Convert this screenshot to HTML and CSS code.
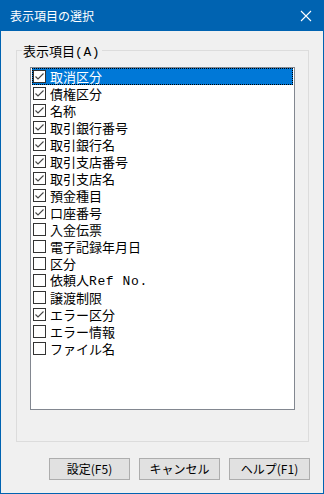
FILE: index.html
```html
<!DOCTYPE html>
<html lang="ja">
<head>
    <meta charset="UTF-8">
    <meta name="viewport" content="width=device-width, initial-scale=1.0">
    <title>表示項目の選択</title>
    <link rel="stylesheet" href="styles.css">
</head>
<body>
    <div class="window">
        <div class="titlebar">
            <span class="title">表示項目の選択</span>
            <span class="close">
                <svg width="12" height="12" viewBox="0 0 12 12">
                    <path d="M1 1 L11 11 M11 1 L1 11" stroke="#fff" stroke-width="1.1" fill="none"/>
                </svg>
            </span>
        </div>

        <div class="content">
            <div class="group">
                <div class="group-label">表示項目<span class="latin">(A)</span></div>
                <ul class="listbox">
                    <li class="item selected"><span class="check on"></span><span>取消区分</span></li>
                    <li class="item"><span class="check on"></span><span>債権区分</span></li>
                    <li class="item"><span class="check on"></span><span>名称</span></li>
                    <li class="item"><span class="check on"></span><span>取引銀行番号</span></li>
                    <li class="item"><span class="check on"></span><span>取引銀行名</span></li>
                    <li class="item"><span class="check on"></span><span>取引支店番号</span></li>
                    <li class="item"><span class="check on"></span><span>取引支店名</span></li>
                    <li class="item"><span class="check on"></span><span>預金種目</span></li>
                    <li class="item"><span class="check on"></span><span>口座番号</span></li>
                    <li class="item"><span class="check"></span><span>入金伝票</span></li>
                    <li class="item"><span class="check"></span><span>電子記録年月日</span></li>
                    <li class="item"><span class="check"></span><span>区分</span></li>
                    <li class="item"><span class="check"></span><span>依頼人<span class="latin">Ref No.</span></span></li>
                    <li class="item"><span class="check"></span><span>譲渡制限</span></li>
                    <li class="item"><span class="check on"></span><span>エラー区分</span></li>
                    <li class="item"><span class="check"></span><span>エラー情報</span></li>
                    <li class="item"><span class="check"></span><span>ファイル名</span></li>
                </ul>
            </div>

            <div class="buttons">
                <button class="btn">設定(F5)</button>
                <button class="btn">キャンセル</button>
                <button class="btn">ヘルプ(F1)</button>
            </div>
        </div>
    </div>
</body>
</html>
```

FILE: styles.css
```css
body {
    margin: 0;
    font-family: "Noto Sans CJK JP", "Noto Sans", sans-serif;
    background-color: #f0f0f0;
}
.window {
    width: 324px;
    height: 494px;
    box-sizing: border-box;
    border: 1px solid #0063b1;
    border-top: none;
    background-color: #f0f0f0;
    display: flex;
    flex-direction: column;
}
.titlebar {
    height: 31px;
    margin: 0 -1px;
    background-color: #0063b1;
    color: #fff;
    display: flex;
    align-items: center;
    justify-content: space-between;
    padding: 0 12px 0 10px;
}
.title {
    font-size: 12px;
    line-height: 16px;
}
.close {
    display: flex;
    margin-top: 1px;
}
.content {
    flex: 1;
    display: flex;
    flex-direction: column;
}
.group {
    margin: 19px 0 0 15px;
    width: 293px;
    height: 392px;
    box-sizing: border-box;
    border: 1px solid #dcdcdc;
    padding: 0 0 0 13px;
}
.group-label {
    margin: -9px 0 0 -8px;
    padding: 0 2px 0 1px;
    width: fit-content;
    background-color: #f0f0f0;
    font-size: 13px;
    line-height: 17px;
    color: #000;
}
.latin {
    font-family: "Liberation Mono", monospace;
    letter-spacing: 0.6px;
}
.listbox {
    list-style: none;
    margin: 6px 0 0 0;
    padding: 0;
    width: 265px;
    height: 343px;
    box-sizing: border-box;
    border: 1px solid #828790;
    background-color: #fff;
}
.item {
    height: 17px;
    display: flex;
    align-items: center;
    gap: 4px;
    padding-left: 1px;
    font-size: 13px;
    line-height: 17px;
    color: #000;
    box-sizing: border-box;
    white-space: nowrap;
}
.item.selected {
    background-color: #0078d7;
    color: #fff;
    outline: 1px dotted #000;
    outline-offset: -1px;
    margin: 0 1px;
    padding-left: 0;
}
.check {
    width: 13px;
    height: 13px;
    box-sizing: border-box;
    border: 1px solid #333;
    background-color: #fff;
    flex-shrink: 0;
    margin-left: 1px;
}
.check.on {
    background: #fff url("data:image/svg+xml;utf8,<svg xmlns='http://www.w3.org/2000/svg' width='11' height='11' viewBox='0 0 11 11'><path d='M1.5 5.5 L4 8 L9.5 2.5' stroke='%23444' stroke-width='1.1' fill='none'/></svg>") no-repeat center;
}
.buttons {
    display: flex;
    justify-content: flex-end;
    gap: 9px;
    margin-top: 16px;
    padding-right: 13px;
}
.btn {
    width: 81px;
    height: 22px;
    padding: 0;
    background-color: #e1e1e1;
    border: 1px solid #adadad;
    font-family: inherit;
    font-size: 12px;
    line-height: 18px;
    color: #000;
}
```
